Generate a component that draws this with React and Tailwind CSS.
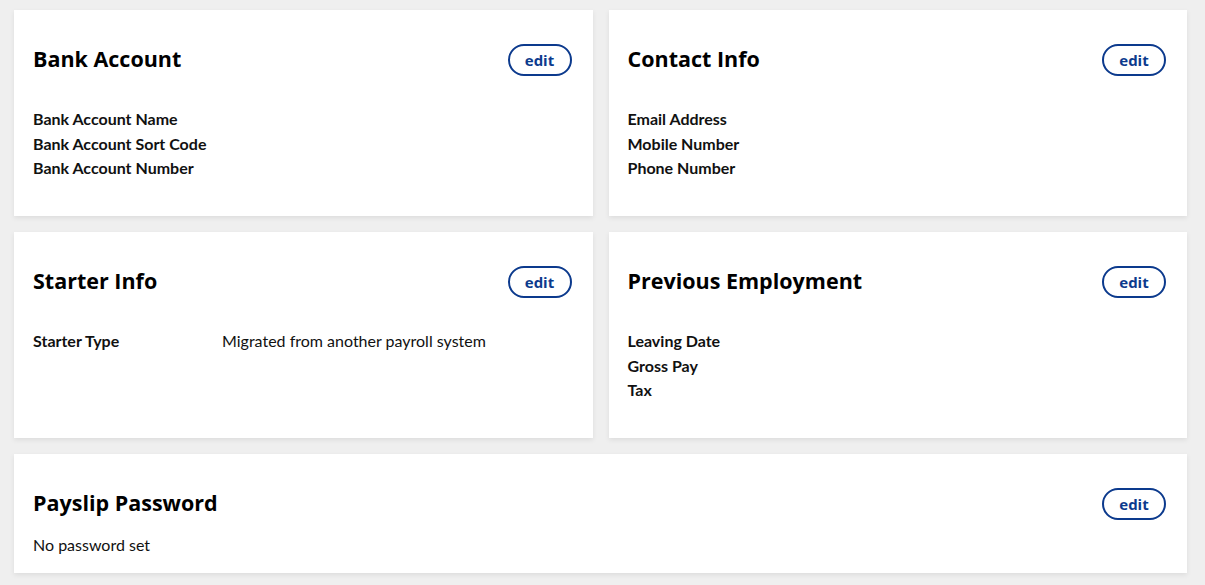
const sections = [
  {
    title: 'Bank Account',
    rows: [['Bank Account Name'], ['Bank Account Sort Code'], ['Bank Account Number']],
  },
  {
    title: 'Contact Info',
    rows: [['Email Address'], ['Mobile Number'], ['Phone Number']],
  },
  {
    title: 'Starter Info',
    rows: [['Starter Type', 'Migrated from another payroll system']],
  },
  {
    title: 'Previous Employment',
    rows: [['Leaving Date'], ['Gross Pay'], ['Tax']],
  },
]

function EditButton() {
  return (
    <button className="h-[32px] w-[64px] rounded-full border-2 border-[#0c3a8d] bg-white text-[15px] font-bold text-[#0c3a8d] font-['Open_Sans',sans-serif] leading-none cursor-pointer">
      edit
    </button>
  )
}

function CardHeader({ title }) {
  return (
    <div className="flex items-center justify-between">
      <h2 className="text-[21.5px] font-bold text-black font-['Open_Sans',sans-serif] leading-[28px] -translate-y-[1px]">
        {title}
      </h2>
      <EditButton />
    </div>
  )
}

function Card({ title, rows }) {
  return (
    <div className="bg-white h-[206px] pl-[19px] pr-[21px] pt-[34px] shadow-[0_2px_5px_rgba(0,0,0,0.08)]">
      <CardHeader title={title} />
      <div className="mt-[31px]">
        {rows.map(([label, value]) => (
          <div key={label} className="flex text-[16px] leading-[24.5px] text-[#111]">
            <span className="w-[189px] font-bold">{label}</span>
            {value && <span>{value}</span>}
          </div>
        ))}
      </div>
    </div>
  )
}

export default function App() {
  return (
    <div className="min-h-[585px] bg-[#efefef] pl-[14px] pr-[18px] pt-[10px] pb-[12px] font-['Lato',sans-serif]">
      <div className="grid grid-cols-2 gap-x-[16px] gap-y-[16px]">
        {sections.map((s) => (
          <Card key={s.title} {...s} />
        ))}
      </div>

      {/* Payslip password */}
      <div className="mt-[16px] bg-white h-[119px] pl-[19px] pr-[21px] pt-[34px] shadow-[0_2px_5px_rgba(0,0,0,0.08)]">
        <CardHeader title="Payslip Password" />
        <p className="mt-[13px] text-[16px] leading-[24px] text-[#111]">No password set</p>
      </div>
    </div>
  )
}
